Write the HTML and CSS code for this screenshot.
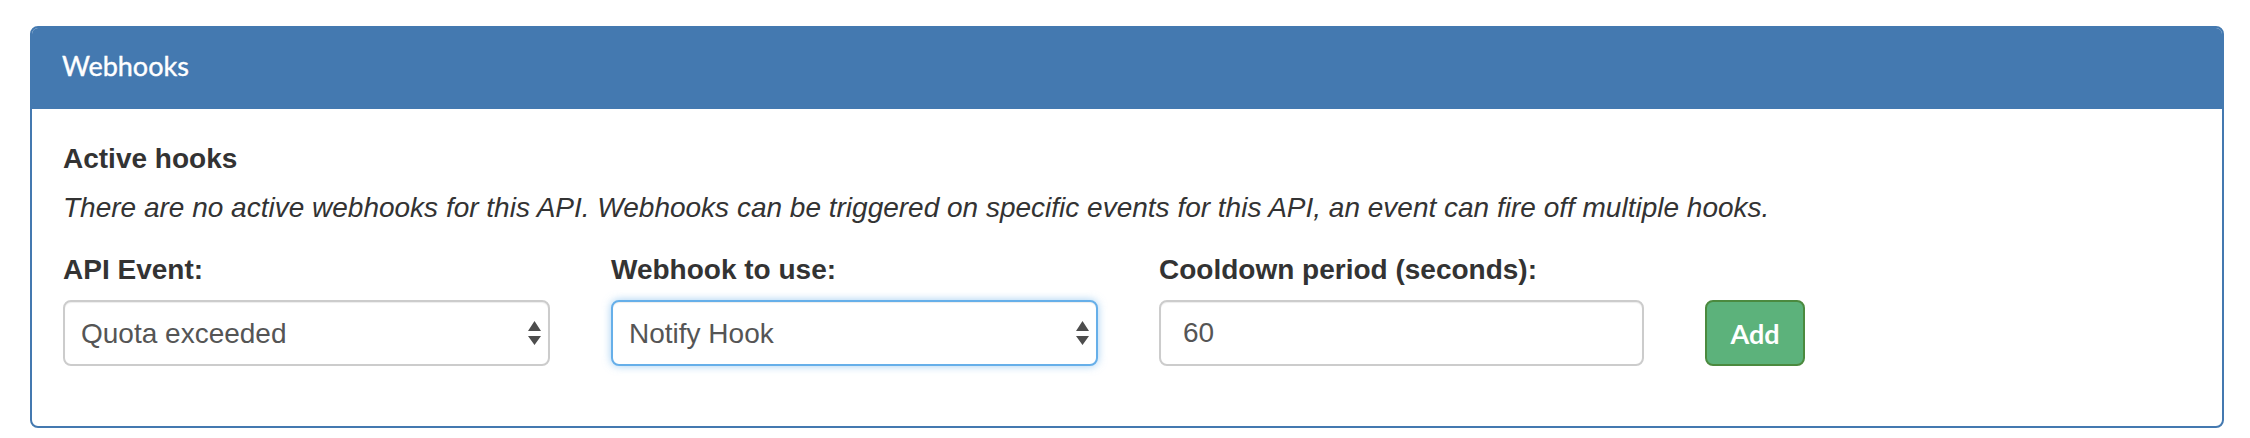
FILE: index.html
```html
<!DOCTYPE html>
<html>
<head>
<meta charset="utf-8">
<title>Webhooks</title>
<link rel="stylesheet" href="styles.css">
</head>
<body>
<div class="panel">
  <div class="panel-heading">Webhooks</div>
  <div class="panel-body">
    <h4 class="section-title">Active hooks</h4>
    <p class="hint">There are no active webhooks for this API. Webhooks can be triggered on specific events for this API, an event can fire off multiple hooks.</p>
    <form class="hook-form">
      <label class="field-label">API Event:</label>
      <label class="field-label">Webhook to use:</label>
      <label class="field-label">Cooldown period (seconds):</label>
      <span></span>
      <div class="select-wrap">
        <select class="control">
          <option>Quota exceeded</option>
        </select>
        <svg class="arrows" width="13" height="24" viewBox="0 0 13 24"><path d="M6.5 0 L13 10 L0 10 Z M0 15 L13 15 L6.5 24 Z" fill="#4d4d4d"/></svg>
      </div>
      <div class="select-wrap">
        <select class="control focused">
          <option>Notify Hook</option>
        </select>
        <svg class="arrows" width="13" height="24" viewBox="0 0 13 24"><path d="M6.5 0 L13 10 L0 10 Z M0 15 L13 15 L6.5 24 Z" fill="#4d4d4d"/></svg>
      </div>
      <input class="control text-input" type="text" value="60">
      <button type="button" class="btn-add">Add</button>
    </form>
  </div>
</div>
</body>
</html>
```
FILE: styles.css
```css
* { box-sizing: border-box; }
html, body { margin: 0; padding: 0; background: #fff; }
body {
  font-family: "Liberation Sans", Arial, sans-serif;
  color: #333;
}
.panel {
  margin: 26px 26px 0 30px;
  border: 2px solid #4479b0;
  border-radius: 8px;
  overflow: hidden;
}
.panel-heading {
  background: #4479b0;
  color: #fff;
  font-family: Lato, "Noto Sans", sans-serif;
  font-size: 27px;
  font-weight: 400;
  line-height: 34px;
  height: 81px;
  padding: 21px 30px 0 30px;
  -webkit-text-stroke: 0.4px #fff;
}
.panel-body {
  padding: 35px 31px 60px 31px;
}
.section-title {
  margin: 0 0 19px 0;
  font-size: 28px;
  font-weight: 700;
  line-height: 30px;
}
.hint {
  margin: 0 0 32px 0;
  font-size: 28px;
  font-style: italic;
  line-height: 30px;
}
.hook-form {
  display: grid;
  grid-template-columns: 487px 487px 485px 100px;
  column-gap: 61px;
  row-gap: 15px;
}
.field-label {
  font-size: 28px;
  font-weight: 700;
  line-height: 30px;
}
.select-wrap {
  position: relative;
  height: 66px;
}
.control {
  display: block;
  width: 100%;
  height: 66px;
  margin: 0;
  border: 2px solid #ccc;
  border-radius: 8px;
  background: #fff;
  color: #555;
  font-family: "Liberation Sans", Arial, sans-serif;
  font-size: 28px;
  padding: 0 40px 0 16px;
  -webkit-appearance: none;
  appearance: none;
  box-shadow: inset 0 1px 1px rgba(0,0,0,.075);
  outline: none;
}
.control.focused {
  border-color: #66afe9;
  box-shadow: inset 0 1px 1px rgba(0,0,0,.075), 0 0 8px rgba(102,175,233,.6);
}
.text-input {
  padding: 0 16px 0 22px;
}
.arrows {
  position: absolute;
  right: 9px;
  top: 21px;
  pointer-events: none;
}
.btn-add {
  width: 100px;
  height: 66px;
  margin: 0;
  border: 2px solid #4b8a3f;
  border-radius: 8px;
  background: #5cb27b;
  color: #fff;
  font-family: Lato, "Noto Sans", sans-serif;
  font-size: 27px;
  font-weight: 700;
  padding: 0;
}
```
